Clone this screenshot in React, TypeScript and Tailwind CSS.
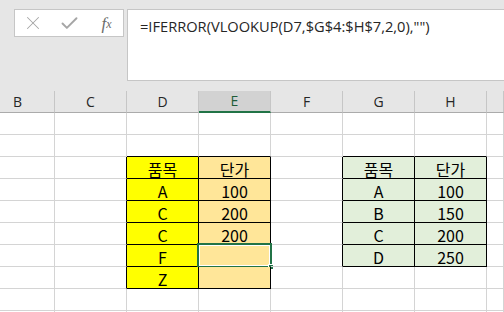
import {X, Check} from "lucide-react";

const cols = ["B", "C", "D", "E", "F", "G", "H", ""];

type Cell = {text: string; bg: string};

// table contents by row (r1..r10) and column index (0=B ... 7=I)
const tables: Record<string, Cell> = {
	"3-2": {text: "품목", bg: "bg-[#ffff00]"},
	"3-3": {text: "단가", bg: "bg-[#ffe699]"},
	"4-2": {text: "A", bg: "bg-[#ffff00]"},
	"4-3": {text: "100", bg: "bg-[#ffe699]"},
	"5-2": {text: "C", bg: "bg-[#ffff00]"},
	"5-3": {text: "200", bg: "bg-[#ffe699]"},
	"6-2": {text: "C", bg: "bg-[#ffff00]"},
	"6-3": {text: "200", bg: "bg-[#ffe699]"},
	"7-2": {text: "F", bg: "bg-[#ffff00]"},
	"7-3": {text: "", bg: "bg-[#ffe699]"},
	"8-2": {text: "Z", bg: "bg-[#ffff00]"},
	"8-3": {text: "", bg: "bg-[#ffe699]"},
	"3-5": {text: "품목", bg: "bg-[#e2efda]"},
	"3-6": {text: "단가", bg: "bg-[#e2efda]"},
	"4-5": {text: "A", bg: "bg-[#e2efda]"},
	"4-6": {text: "100", bg: "bg-[#e2efda]"},
	"5-5": {text: "B", bg: "bg-[#e2efda]"},
	"5-6": {text: "150", bg: "bg-[#e2efda]"},
	"6-5": {text: "C", bg: "bg-[#e2efda]"},
	"6-6": {text: "200", bg: "bg-[#e2efda]"},
	"7-5": {text: "D", bg: "bg-[#e2efda]"},
	"7-6": {text: "250", bg: "bg-[#e2efda]"},
};

const rows = [1, 2, 3, 4, 5, 6, 7, 8, 9, 10];

function inTable(r: number, c: number) {
	return tables[`${r}-${c}`] !== undefined;
}

export default function App() {
	return (
		<div className="w-[504px] h-[312px] overflow-hidden bg-white font-['Noto_Sans_CJK_KR','Noto_Sans',sans-serif]">
			{/* formula bar */}
			<div className="h-[91px] bg-[#e6e6e6] flex items-start pt-[9px] pl-[14px] gap-[3px]">
				<div className="w-[110px] h-[28px] bg-white border border-[#c6c6c6] flex items-center">
					<span className="w-[36px] flex justify-center">
						<X className="w-[22px] h-[22px] text-[#a6a6a6]" strokeWidth={1.1} />
					</span>
					<span className="w-[36px] flex justify-center">
						<Check className="w-[21px] h-[21px] text-[#a6a6a6]" strokeWidth={2.2} />
					</span>
					<span className="w-[36px] pl-[3px] flex justify-center font-['Liberation_Serif',serif] italic text-[17px] text-[#6b6b6b] leading-none">
						f<span className="text-[12px] pt-[3px]">x</span>
					</span>
				</div>
				<div className="flex-1 h-[72px] bg-white border border-r-0 border-[#c6c6c6] pl-[12px] pt-[6px] text-[14.65px] leading-[20px] text-[#262626] font-['Open_Sans',sans-serif]">
					=IFERROR(VLOOKUP(D7,$G$4:$H$7,2,0),"")
				</div>
			</div>

			{/* column headers */}
			<div className="grid grid-cols-[55px_repeat(6,72px)_1fr] h-[22px] bg-[#e6e6e6] text-[14px] font-['Open_Sans',sans-serif]">
				{cols.map((c, i) =>
					c === "E" ? (
						<div key={i} className="bg-[#d2d2d2] border-r border-r-[#c6c6c6] border-b-2 border-b-[#217346] flex items-center justify-center text-[#1e5c38] leading-none">
							{c}
						</div>
					) : (
						<div
							key={i}
							className={`${i === 0 ? "justify-end pr-[32px]" : "justify-center"} border-r border-r-[#c6c6c6] border-b border-b-[#ababab] flex items-center text-[#262626] leading-none`}
						>
							{c}
						</div>
					)
				)}
			</div>

			{/* cells */}
			{rows.map((r) => (
				<div key={r} className="grid grid-cols-[55px_repeat(6,72px)_1fr] h-[22px] text-[16px] text-black">
					{cols.map((_, c) => {
						const cell = tables[`${r}-${c}`];
						const right = inTable(r, c) || inTable(r, c + 1);
						const bottom = inTable(r, c) || inTable(r + 1, c);
						const selected = r === 7 && c === 3;
						return (
							<div
								key={c}
								className={`relative flex items-center justify-center leading-none pt-[2px] border-r border-b ${right ? "border-r-black" : "border-r-[#d4d4d4]"} ${bottom ? "border-b-black" : "border-b-[#d4d4d4]"} ${cell ? cell.bg : ""}`}
							>
								{cell?.text}
								{selected && (
									<>
										<div className="absolute -left-[2px] -top-[2px] -right-[2px] -bottom-[2px] border-2 border-[#217346] shadow-[inset_0_0_0_1px_white]" />
										<div className="absolute -right-[4px] -bottom-[4px] w-[6px] h-[6px] bg-[#217346] border border-white" />
									</>
								)}
							</div>
						);
					})}
				</div>
			))}
		</div>
	);
}
